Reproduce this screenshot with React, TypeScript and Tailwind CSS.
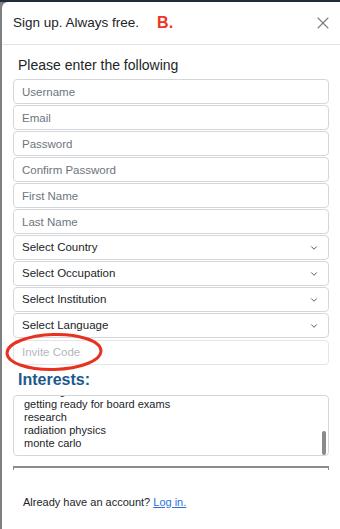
import React from 'react';
import { X, ChevronDown } from 'lucide-react';

const textFields = ['Username', 'Email', 'Password', 'Confirm Password', 'First Name', 'Last Name'];
const selectFields = ['Select Country', 'Select Occupation', 'Select Institution', 'Select Language'];
const interests = ['teaching', 'getting ready for board exams', 'research', 'radiation physics', 'monte carlo'];

const App = () => {
  return (
    <div
      className="w-[340px] h-[529px] overflow-hidden bg-[#7f7f7f] border-t-2 border-[#1d2b3a] pl-[2px]"
      style={{ fontFamily: '"Liberation Sans", Arial, sans-serif' }}
    >
      <div className="h-full bg-white rounded-tl-md flex flex-col">
        {/* header */}
        <div className="h-[43px] shrink-0 flex items-center justify-between pl-[11px] pr-[7px] border-b border-[#e4e4e4]">
          <div className="flex items-center">
            <span className="text-[13.5px] text-[#212529]">Sign up. Always free.</span>
            <span className="ml-[18px] text-[16px] font-bold text-[#ee3524]">B.</span>
          </div>
          <X className="text-[#7a7a7a]" size={20} strokeWidth={1.3} />
        </div>

        {/* body */}
        <div className="h-[425px] shrink-0 overflow-hidden px-[11px]">
          <h2 className="mt-[10px] ml-[5px] text-[14px] leading-[20px] font-medium text-[#212529]">
            Please enter the following
          </h2>
          <div className="mt-[4px] flex flex-col gap-px">
            {textFields.map((f) => (
              <input
                key={f}
                type="text"
                placeholder={f}
                className="h-[25px] w-full rounded-[4px] border border-[#d3d7dc] px-[8px] text-[11.5px] text-[#212529] placeholder:text-[#6c757d] outline-none"
              />
            ))}
            {selectFields.map((f) => (
              <div
                key={f}
                className="h-[25px] w-full rounded-[4px] border border-[#d3d7dc] pl-[8px] pr-[9px] flex items-center justify-between text-[11.5px] text-[#212529]"
              >
                <span>{f}</span>
                <ChevronDown className="text-[#343a40]" size={10} strokeWidth={2} />
              </div>
            ))}
            <div className="relative">
              <input
                type="text"
                placeholder="Invite Code"
                className="h-[25px] w-full rounded-[4px] border border-[#e3e6e9] px-[8px] text-[11.5px] placeholder:text-[#b3b8bd] outline-none"
              />
              <svg className="absolute left-[-9px] top-[-7px] pointer-events-none" width="100" height="40" viewBox="0 0 100 40">
                <ellipse cx="50" cy="20" rx="47" ry="17.5" fill="none" stroke="#e8321f" strokeWidth="3" transform="rotate(-1.5 50 20)" />
              </svg>
            </div>
          </div>

          <h3 className="mt-[4px] ml-[5px] text-[16px] leading-[22px] font-bold text-[#1d5a8c]">Interests:</h3>

          <div className="relative mt-[4px] h-[61px] rounded-[4px] border border-[#d3d7dc] overflow-hidden">
            <div className="mt-[-11px] pl-[10px] text-[11px] leading-[13px] text-[#212529]">
              {interests.map((i) => (
                <div key={i}>{i}</div>
              ))}
            </div>
            <div className="absolute right-[2px] top-[35px] w-[4px] h-[24px] rounded-full bg-[#8a8a8a]" />
          </div>

          <div className="mt-[10px] border-t-2 border-x border-[#8c8c8c] pl-[5px] pt-px text-[14px] leading-[14px] font-bold text-[#212529] whitespace-nowrap">
            Terms and Conditions of Service Agreement
          </div>
        </div>

        {/* footer */}
        <div className="flex-1 pl-[21px] pt-[24px] text-[11px] text-[#212529]">
          Already have an account?{' '}
          <a href="#" className="text-[#2a6fdb] underline">Log in.</a>
        </div>
      </div>
    </div>
  );
};

export default App;
